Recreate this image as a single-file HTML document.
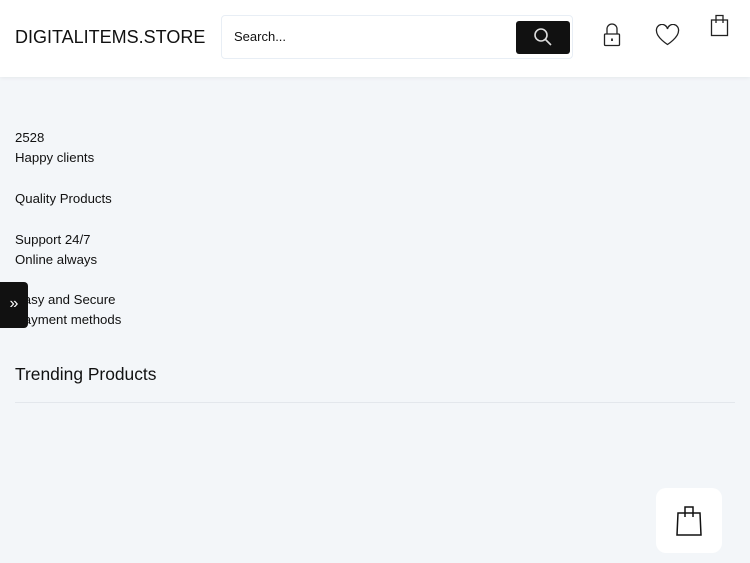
<!DOCTYPE html>
<html><head><meta charset="utf-8"><style>
*{margin:0;padding:0;box-sizing:border-box}
body{width:750px;height:563px;overflow:hidden;background:#f3f6f9;font-family:"Liberation Sans",sans-serif;color:#111;position:relative}
.hdr{position:absolute;left:0;top:0;width:750px;height:77px;background:#fff;box-shadow:0 1px 4px rgba(0,0,0,.06)}
.logo{position:absolute;left:15px;top:27px;font-size:18px;color:#111}
.search{position:absolute;left:221px;top:15px;width:352px;height:44px;border:1px solid #e8eef5;border-radius:4px;background:#fff}
.search span{position:absolute;left:12px;top:13px;font-size:13px;color:#111}
.btn{position:absolute;left:294px;top:5px;width:54px;height:33px;background:#111;border-radius:3px}
.btn svg{position:absolute;left:17px;top:6px}
.ic{position:absolute}
.t{position:absolute;left:15px;font-size:13.2px;line-height:20px}
.tab{position:absolute;left:0;top:282px;width:28px;height:46px;background:#111;border-radius:0 4px 4px 0;color:#fff;font-size:16px;text-align:center;line-height:44px}
h2{position:absolute;left:15px;top:364px;font-size:17.4px;font-weight:normal}
.line{position:absolute;left:15px;top:402px;width:720px;height:1px;background:#e3e7ec}
.cart{position:absolute;left:656px;top:488px;width:66px;height:65px;background:#fff;border-radius:10px}
</style></head><body>
<div class="hdr">
<div class="logo">DIGITALITEMS.STORE</div>
<div class="search"><span>Search...</span>
<div class="btn"><svg width="20" height="20" viewBox="0 0 20 20" fill="none" stroke="#ddd" stroke-width="1.6"><circle cx="8" cy="8" r="6"/><path d="M12.5 12.5L18 18"/></svg></div></div>
<svg class="ic" style="left:602px;top:23px" width="20" height="24" viewBox="0 0 20 24" fill="none" stroke="#222" stroke-width="1.3"><path d="M5 11V6a5 5 0 0 1 10 0v5"/><rect x="2.5" y="11" width="15" height="11.5" rx="1"/><path d="M10 15.5v2.5" stroke-width="1.8"/></svg>
<svg class="ic" style="left:655px;top:24px" width="25" height="22" viewBox="0 0 25 22" fill="none" stroke="#222" stroke-width="1.3"><path d="M12.5 20.5S1.5 13.5 1.5 7A5.5 5.5 0 0 1 12.5 5a5.5 5.5 0 0 1 11 2c0 6.5-11 13.5-11 13.5z"/></svg>
<svg class="ic" style="left:710px;top:14px" width="19" height="23" viewBox="0 0 19 23" fill="none" stroke="#222" stroke-width="1.3"><rect x="1.5" y="6" width="16" height="15.5"/><path d="M6 9V1.5h7V9"/></svg>
</div>
<div class="t" style="top:128px">2528<br>Happy clients</div>
<div class="t" style="top:189px">Quality Products</div>
<div class="t" style="top:230px">Support 24/7<br>Online always</div>
<div class="t" style="top:290px">Easy and Secure<br>Payment methods</div>
<div class="tab">»</div>
<h2>Trending Products</h2>
<div class="line"></div>
<div class="cart"><svg style="position:absolute;left:20px;top:16px" width="26" height="33" viewBox="0 0 26 33" fill="none" stroke="#111" stroke-width="1.5"><path d="M2 9h22l1 22H1z"/><path d="M9 13V3h8v10"/></svg></div>
</body></html>
